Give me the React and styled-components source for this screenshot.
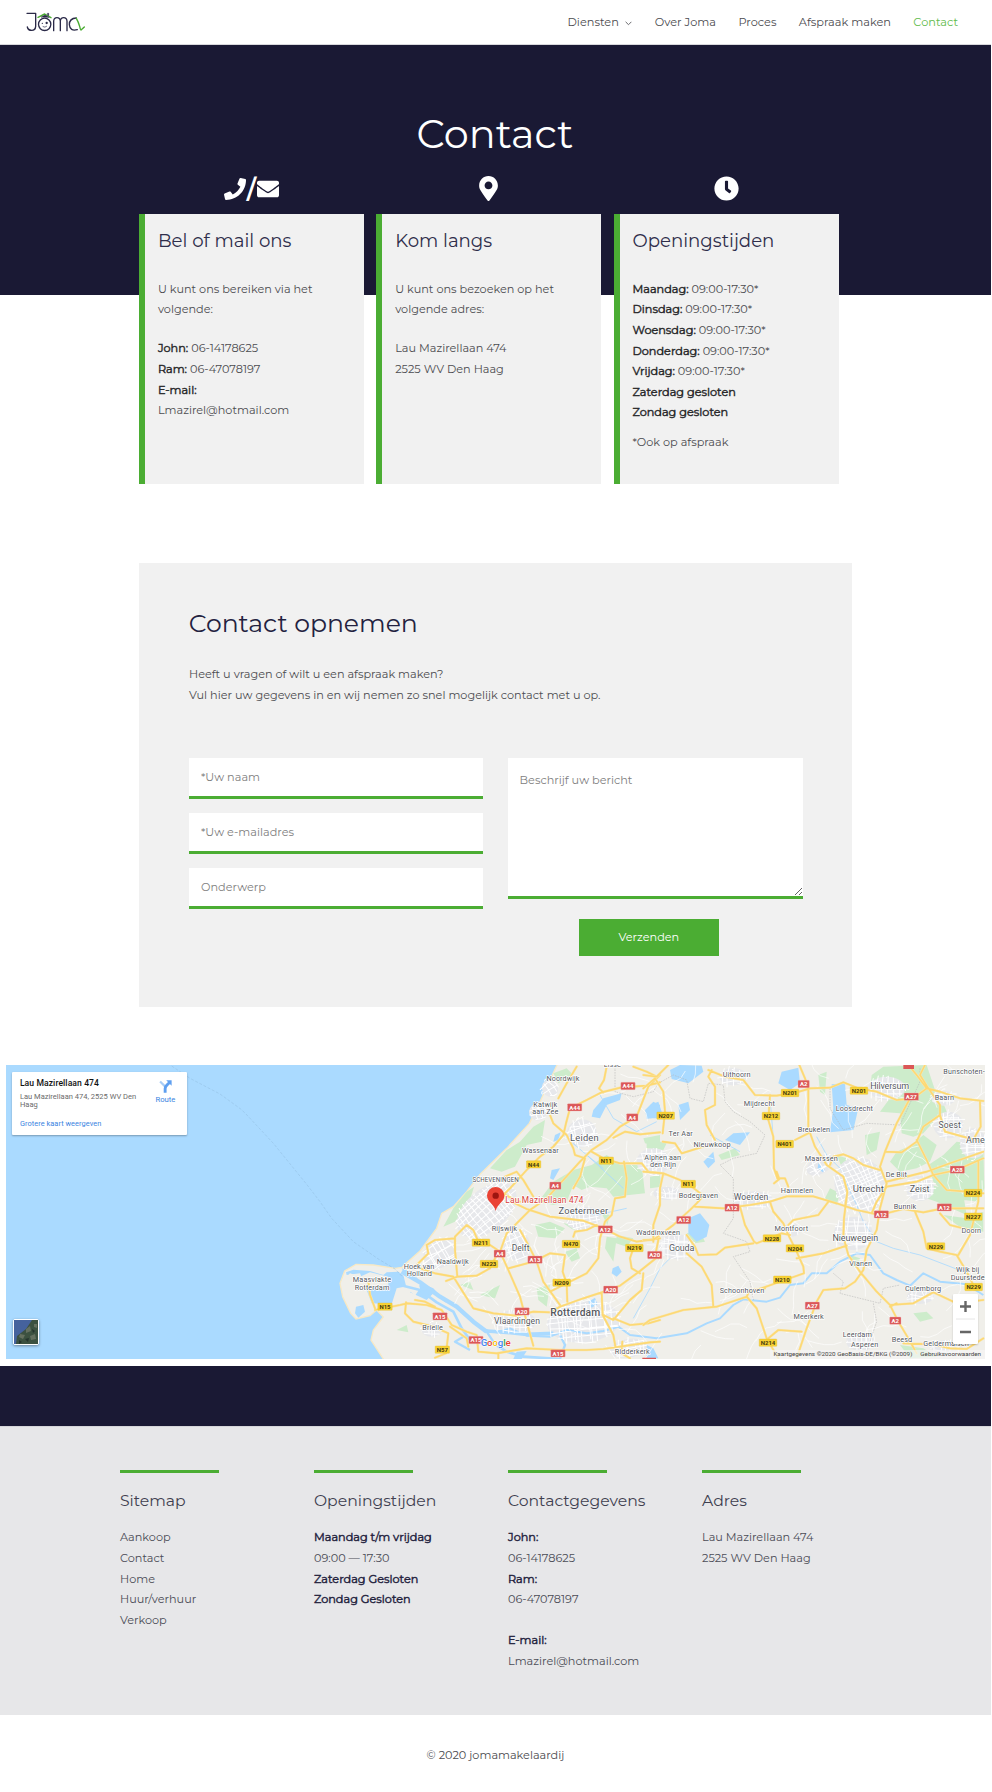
import React from 'react';
import styled, { createGlobalStyle } from 'styled-components';
import { FaPhone, FaEnvelope, FaMapMarkerAlt, FaClock } from 'react-icons/fa';

const GREEN = '#4bad33';
const NAVY = '#1a1934';

const Global = createGlobalStyle`
  * { box-sizing: border-box; }
  body { margin: 0; background: #fff; }
  body, input, textarea, button {
    font-family: Montserrat, Inter, "Liberation Sans", sans-serif;
    font-size: 11.27px;
  }
`;

const Page = styled.div`
  width: 991px;
  min-height: 1792px;
  background: #fff;
  color: #4c4c50;
  line-height: 20.6px;
`;

/* ---------- header ---------- */
const Header = styled.header`
  display: flex;
  align-items: center;
  justify-content: space-between;
  height: 45px;
  padding: 0 33px 0 26px;
  border-bottom: 1px solid #d8d8dc;
`;
const Nav = styled.nav`
  display: flex;
  gap: 22.4px;
  font-size: 11.33px;
`;
const NavLink = styled.a`
  display: flex;
  align-items: center;
  gap: 6.5px;
  color: ${(p) => (p.$active ? '#5fbb4b' : '#4c4c50')};
  svg { width: 7px; height: 5px; margin-top: 2px; }
`;
const LogoSvg = styled.svg`
  width: 60px;
  height: 22px;
`;

function Logo() {
  return (
    <LogoSvg viewBox="78 34 180 66" fill="none" strokeLinecap="round" strokeLinejoin="round">
      <g stroke="#2b2a48" strokeWidth="4">
        <path d="M81 41H107V80Q106 92 95 92Q84 92 82 82" />
        <circle cx="134" cy="74" r="18.5" />
        <path d="M161 93V64Q162 54 171 54Q180 54 181 64V93M181 64Q182 54 191 54Q200 54 201 64V93" />
        <path d="M232 90Q210 96 208 75Q208 56 229 55" />
      </g>
      <path d="M114 53L134 43L153 54M229 56Q235 66 239 80Q241 90 243 91L253 82" stroke={GREEN} strokeWidth="4.2" />
      <path d="M124 52L135 46L147 53ZM143 41H146V48L143 46Z" fill="#2b2a48" stroke="#2b2a48" strokeWidth="1.5" />
      <circle cx="127" cy="71" r="2" fill="#2b2a48" />
      <circle cx="140" cy="70" r="3.5" fill="#2b2a48" />
      <path d="M129 81Q135 85 140 80" stroke="#2b2a48" strokeWidth="2" />
    </LogoSvg>
  );
}

/* ---------- hero and info cards ---------- */
const Hero = styled.section`
  height: 250px;
  padding: 65px 0 0 139px;
  background: ${NAVY};
`;
const HeroTitle = styled.h1`
  margin: 0;
  padding-left: 277.5px;
  font-size: 39.8px;
  font-weight: 400;
  line-height: 47px;
  color: #fff;
`;
const InfoGrid = styled.div`
  display: grid;
  grid-template-columns: repeat(3, 225px);
  column-gap: 12.3px;
`;
const IconLine = styled.div`
  display: flex;
  align-items: center;
  justify-content: center;
  height: 57px;
  padding-top: 6px;
  color: #fff;
`;
const Slash = styled.span`
  width: 11px;
  text-align: center;
  font-size: 25px;
  font-weight: 600;
  line-height: 28px;
`;
const InfoCard = styled.article`
  height: 270px;
  padding: 14.5px 12px 0 12.9px;
  border-left: 6px solid ${GREEN};
  background: #f1f1f1;
`;
const CardTitle = styled.h2`
  margin: 0 0 26.3px;
  font-size: 18.15px;
  font-weight: 400;
  line-height: 24px;
  color: #2f2e4b;
`;
const Para = styled.p`
  margin: 0 0 ${(p) => p.$after || 0}px;
`;
const Strong = styled.strong`
  font-weight: 400;
  -webkit-text-stroke: 0.45px currentColor;
  color: ${(p) => (p.$navy ? '#25243f' : '#2a2a2c')};
`;

/* ---------- form ---------- */
const FormPanel = styled.section`
  width: 713px;
  height: 444px;
  margin: 268px 0 0 139px;
  padding: 45px 50px 0;
  background: #f1f1f1;
`;
const FormTitle = styled.h2`
  margin: 0 0 26.2px;
  font-size: 25.1px;
  font-weight: 400;
  line-height: 30px;
  text-indent: -0.3px;
  color: #23223f;
`;
const FormGrid = styled.form`
  display: grid;
  grid-template-columns: 294px 295px;
  column-gap: 24.6px;
  margin-top: 52.3px;
`;
const Fields = styled.div`
  display: flex;
  flex-direction: column;
  gap: 13.8px;
`;
const Input = styled.input`
  display: block;
  width: 100%;
  height: 41.3px;
  padding: 0 12px;
  border: 0;
  border-bottom: 3px solid ${GREEN};
  border-radius: 0;
  outline: 0;
  background: #fff;
  &::placeholder { color: #808080; opacity: 1; }
`;
const Message = styled.textarea`
  display: block;
  width: 100%;
  height: 141px;
  padding: 12px;
  border: 0;
  border-bottom: 3px solid ${GREEN};
  outline: 0;
  line-height: 20.6px;
  background: #fff;
  &::placeholder { color: #808080; opacity: 1; }
`;
const Submit = styled.button`
  display: block;
  width: 140px;
  height: 37px;
  margin: 20.5px 0 0 71.3px;
  padding: 0 0 1px;
  border: 0;
  background: ${GREEN};
  color: #fff;
`;

/* ---------- map ---------- */
const MapFrame = styled.section`
  position: relative;
  width: 979px;
  height: 293.6px;
  margin: 58.4px 0 0 6px;
  overflow: hidden;
  background: #aadaff;
  font-family: Roboto, sans-serif;
`;
const MapSvg = styled.svg`
  display: block;
  width: 979px;
  height: 294px;
  font-family: Roboto, sans-serif;
`;
const PlaceCard = styled.div`
  position: absolute;
  top: 6.7px;
  left: 6.4px;
  display: flex;
  justify-content: space-between;
  width: 175px;
  height: 62.5px;
  padding: 6px 12px 0 7.5px;
  border-radius: 1px;
  background: #fff;
  box-shadow: 0 1px 2px rgba(0, 0, 0, 0.3);
`;
const PlaceName = styled.div`
  font-size: 8.6px;
  font-weight: 500;
  line-height: 11px;
  letter-spacing: 0.08px;
  color: #111;
`;
const PlaceText = styled.div`
  width: 122px;
  margin: 3.5px 0 9.5px;
  font-size: 7.55px;
  line-height: 8.6px;
  color: #6b6b6b;
`;
const MapLink = styled.a`
  display: block;
  font-size: 7.4px;
  line-height: 9px;
  letter-spacing: 0.05px;
  color: #3a84df;
`;
const RouteLink = styled.a`
  display: flex;
  flex-direction: column;
  align-items: center;
  padding-top: 1.5px;
  font-size: 7.7px;
  line-height: 13px;
  color: #3a84df;
  svg { width: 13px; height: 13px; }
`;
const Thumb = styled.div`
  position: absolute;
  left: 6.5px;
  bottom: 13.5px;
  width: 26px;
  height: 26px;
  border: 1.5px solid #fff;
  border-radius: 2px;
  box-shadow: 0 1px 3px rgba(0, 0, 0, 0.4);
  svg { display: block; width: 100%; height: 100%; }
`;
const ZoomBox = styled.div`
  position: absolute;
  right: 6.7px;
  bottom: 15px;
  width: 25px;
  height: 50px;
  border-radius: 1px;
  background: #fff;
  box-shadow: 0 1px 2px rgba(0, 0, 0, 0.2);
  svg { display: block; width: 25px; height: 50px; }
`;
const Attribution = styled.div`
  position: absolute;
  right: 0;
  bottom: 0;
  display: flex;
  gap: 8px;
  height: 9px;
  padding: 0 4px 0 3px;
  background: rgba(245, 245, 245, 0.7);
  font-size: 6.25px;
  line-height: 9px;
  white-space: nowrap;
  color: #444;
`;

// The drawing works in two sheets of three units per pixel: west, and east shifted by 990 units.
const westLabels = [
  ['Lisse', 877, 37, 52, 22], ['Noordwijk', 729, 77, 99, 22], ['Katwijk', 676, 156, 72, 22], ['aan Zee', 676, 178, 78, 22],
  ['Leiden', 793, 258, 86, 28], ['Wassenaar', 661, 293, 110, 22], ['SCHEVENINGEN', 527, 381, 139, 19],
  ['Zoetermeer', 790, 477, 149, 28], ['Rijswijk', 553, 527, 76, 22], ['Delft', 602, 587, 54, 26],
  ['Naaldwijk', 398, 627, 96, 22], ['Hoek van', 297, 642, 92, 22], ['Holland', 298, 664, 76, 22],
  ['Maasvlakte', 156, 682, 115, 22], ['Rotterdam', 156, 704, 104, 22], ['Rotterdam', 766, 782, 150, 31, 500],
  ['Vlaardingen', 591, 807, 138, 26], ['Brielle', 338, 826, 62, 22], ['Ridderkerk', 937, 897, 105, 22],
];
const eastLabels = [
  ['Uithoorn', 260, 66, 84, 22], ['Mijdrecht', 328, 153, 94, 22], ['Ter Aar', 92, 244, 73, 22], ['Nieuwkoop', 186, 276, 111, 22],
  ['Alphen aan', 38, 315, 110, 22], ['den Rijn', 39, 337, 78, 22], ['Bodegraven', 145, 428, 118, 22], ['Woerden', 303, 435, 104, 26],
  ['Harmelen', 441, 415, 97, 22], ['Waddinxveen', 24, 541, 132, 22], ['Gouda', 95, 588, 76, 27], ['Montfoort', 424, 529, 101, 22],
  ['Schoonhoven', 276, 715, 134, 22], ['Breukelen', 492, 231, 97, 22], ['Maarssen', 514, 317, 99, 22], ['Loosdrecht', 613, 168, 112, 22],
  ['Hilversum', 719, 101, 117, 27], ['Bunschoten-', 942, 58, 124, 22], ['Baarn', 883, 134, 58, 22], ['Soest', 899, 219, 67, 26],
  ['Ame', 976, 265, 56, 27], ['De Bilt', 739, 367, 64, 22], ['Utrecht', 655, 411, 93, 29], ['Zeist', 809, 411, 59, 27],
  ['Bunnik', 765, 461, 68, 22], ['Doorn', 964, 533, 59, 22], ['Nieuwegein', 616, 557, 137, 27], ['Vianen', 632, 632, 68, 22],
  ['Culemborg', 819, 708, 108, 22], ['Wijk bij', 953, 652, 70, 22], ['Duurstede', 953, 675, 102, 22], ['Meerkerk', 476, 792, 91, 22],
  ['Leerdam', 622, 845, 87, 22], ['Asperen', 644, 875, 82, 22], ['Beesd', 756, 860, 61, 22], ['Geldermalsen', 888, 872, 137, 22],
];
const westShields = [
  ['A44', 924, 93], ['A44', 764, 157], ['A4', 937, 187], ['N44', 641, 328], ['N11', 859, 317], ['A4', 706, 392], ['A12', 856, 523],
  ['N211', 483, 563], ['A4', 539, 596], ['N470', 753, 567], ['N223', 507, 627], ['A13', 645, 614], ['N219', 943, 579], ['N209', 725, 683],
  ['A20', 872, 704], ['N15', 195, 755], ['A15', 360, 784], ['A20', 606, 769], ['A15', 468, 855], ['N57', 367, 884], ['A15', 714, 895],
];
const eastShields = [
  ['A2', 461, 87], ['N201', 420, 114], ['N201', 627, 107], ['A27', 784, 125], ['N207', 47, 182], ['N212', 363, 183],
  ['N401', 404, 267], ['A28', 922, 344], ['N11', 115, 387], ['N224', 969, 414], ['A12', 246, 458], ['A12', 694, 478], ['A12', 883, 457],
  ['N227', 970, 485], ['A12', 101, 495], ['A20', 14, 600], ['N228', 366, 550], ['N204', 435, 580], ['N229', 858, 574], ['N210', 397, 674],
  ['N229', 971, 696], ['A27', 487, 752], ['A2', 736, 797], ['N214', 354, 863],
];

const westRoads = [
  // A44, A4 and A12 fan out of The Hague
  'M1020 82L980 92L905 97L845 112L800 135L750 160L738 205L730 240L700 275L660 305L620 345L570 400L530 440',
  'M1020 60L985 95L950 185L900 215L860 255L815 285L780 320L730 375L680 430L630 465L590 505L560 535L540 590L565 645L600 725L620 800L640 872',
  'M860 35L852 75L837 100L850 112M770 35L740 85L715 130M690 180L700 205L740 240L760 280L765 300L795 310L780 365L760 400',
  'M575 440L620 462L690 485L790 497L850 520L900 545L950 560L1020 550',
  'M600 525L625 570L650 620L670 680L720 750M600 440L555 420L520 445M555 365L590 350L610 375L640 425',
  'M540 590L510 570L475 560L460 525L440 510L405 545L405 585L412 665L378 678M405 550L345 555L320 570L325 595L285 635',
  'M412 665L470 662L510 640L530 600M300 640L345 655L400 665L425 705L460 760L520 775L590 782L640 770L690 772L720 755L790 730L845 712L900 692L960 648L1020 600',
  'M565 640L640 620L690 595L735 600L728 650L740 685L742 740M690 710L730 690L800 655L835 610L840 550L855 500L875 480L885 430L915 425L920 370L912 320',
  'M815 290L850 310L900 325L965 325L985 350L1020 355M880 248L915 230L960 238L1020 232M760 545L765 530L800 525L830 510',
  'M165 765L240 750L262 745L320 750L365 765L395 810L440 830L470 840L475 890L530 895L620 880L720 885L800 885L850 882L990 862L1020 860',
  'M258 742L255 775L280 800L340 815L385 835L378 895L345 908M390 815L440 850L445 875',
  'M845 715L848 780L880 840L888 885L930 910M850 780L880 795L930 735L965 705L970 655M880 790L930 810L985 805L1020 795',
  'M145 680L150 720L165 760M285 735L315 740L345 755M940 580L930 610L935 640L960 655M1015 555L1008 590L1015 610M535 895V912',
  'M940 35L980 50L1010 65M905 890L907 860',
];
const eastRoads = [
  'M-20 60L20 65L55 30M-20 100L15 70L40 110L45 170L38 235M38 260L75 265L95 295L160 275',
  'M185 45L175 65L195 95L195 150L165 165L170 210L195 255M175 45L225 65L280 75L315 120L380 122L440 112L480 100L540 98L580 82L625 100L680 110L740 135L790 130L830 100L800 60L775 30',
  'M360 120L355 195L370 245L372 340L382 370L405 370L415 395',
  'M448 30L465 70L475 100L475 220L495 275L530 330L580 365L592 410L582 490L580 545L595 600L630 650L680 710L720 750L745 800L775 850L800 895',
  'M475 235L435 255M590 425L585 455M372 385L388 372L380 350',
  'M-20 350L40 355L90 375L125 395L160 422L140 445L120 465L70 510L10 555L-20 555M40 355L30 400L30 450L10 510L10 560',
  'M135 455L220 460L300 450L360 440L410 424L490 424L560 445L620 465L690 480L760 462L820 472L880 460L1000 460',
  'M270 455L285 510L312 560L320 565L395 535L420 540M360 440L370 470L400 505L415 540L440 590L460 635L462 655L390 680L320 705',
  'M415 510L430 495L505 480L535 440M440 610L520 595L590 572M110 540L135 575L145 600L200 598L225 578L310 565M110 595L155 635L185 690L190 755',
  'M-20 810L0 795L100 765L200 755L290 725L320 760L350 850L385 910M290 725L300 705L345 700M355 850L385 825L455 830M440 910L470 820L500 740L520 705L585 700L615 680L640 645L650 585L680 525L690 460L710 385L690 335L705 290L740 205L780 130',
  'M540 330L550 305L580 298L610 310L640 330L690 345M705 290L755 292L800 260L820 215L870 180L870 150L835 100L810 60L825 30',
  'M830 100L870 110L930 130L1000 138M870 180L885 230L950 248L1000 260M990 140L992 215L975 245M800 255L830 315L850 360L890 405L950 410L1000 415',
  'M665 475L680 440L710 395L800 380L850 360L920 345L1000 310M710 380L830 350L900 325L1000 290M985 320V440L960 540L925 600M795 470L820 530L830 580L870 590L920 600L950 650L975 700',
  'M870 475L900 510L960 525M720 750L790 745L850 712L920 745L1000 735M760 865L850 868L900 880L950 882L1000 850M720 755L740 745',
];
const greens = [
  'M815 330L860 300L900 330L965 330L975 415L880 425L860 400L810 395L785 405L760 390L740 440L700 450L655 440L700 380L760 345Z',
  'M640 215L675 195L665 260L620 270L585 335L545 350L510 340L560 285L600 260Z', 'M440 410L462 395L450 435L405 500L370 515L400 460Z',
  'M700 55L740 40L760 60L715 85ZM970 250L1020 240L1020 275L975 265ZM645 510L690 500L735 520L705 550L655 545Z',
  'M860 545L890 550L880 620L855 580ZM650 700L690 690L680 755L655 735ZM735 590L770 580L780 610L755 620ZM845 475L870 480L862 510Z',
  'M890 540L940 550L920 575L888 565ZM480 720L540 690L525 730ZM405 465L455 470L415 505ZM730 505L790 510L760 525ZM420 690L450 680L460 705ZM230 825L260 810L265 832ZM880 880L935 860L930 890L890 905Z',
];
const eastGreens = [
  'M700 35L830 30L870 150L860 190L820 235L790 245L755 235L750 175L690 170L720 130L660 110L665 60Z',
  'M785 270L820 240L860 270L840 320L800 340L750 350L720 320L740 290Z',
  'M835 330L880 300L920 260L1000 270L1003 400L985 440L900 430L850 380Z',
  'M830 385L940 420L950 480L860 440L800 420ZM880 480L950 490L1000 470L1000 530L935 520Z',
  'M840 110L870 120L890 170L870 195ZM645 240L690 230L680 285L650 300ZM560 300L590 310L610 345L575 335Z',
  'M540 400L570 415L560 450L525 430ZM790 775L830 770L850 790L810 800ZM205 300L255 280L270 300L215 315ZM0 365L30 360L35 395L0 400ZM-10 250L50 265L40 285L-10 280Z',
  'M505 60L530 50L525 120L510 110ZM750 870L820 880L860 905L780 910ZM620 320L680 330L670 350L640 345ZM110 535L150 530L165 560L135 565ZM600 600L630 610L620 640L600 630Z',
];
const lakes = [
  'M820 165L850 130L905 115L900 135L860 150L840 190L815 185ZM975 165L1000 140L1020 150V185L980 192ZM705 240L722 232L715 255L700 260Z',
  'M878 640L895 632L905 650L890 665L875 655ZM805 740L825 728L832 748L815 758ZM108 755L130 750L135 770L115 788L105 775ZM695 345L720 340L700 375L690 370ZM590 890L620 888L605 912H580Z',
];
const eastLakes = [
  'M60 45L90 30L155 32L160 50L115 85L65 72ZM395 50L445 38L450 85L420 105L385 85ZM545 88L585 85L590 150L625 160L610 225L540 232L550 160ZM0 150L25 140L35 170L25 190L0 190Z',
  'M85 150L115 140L120 165L90 195ZM160 320L190 290L195 320L175 340ZM250 235L300 232L270 270L225 255ZM115 490L150 475L178 510L170 545L140 560L115 535ZM505 325L525 345L518 352L503 340ZM-10 870L10 880L25 910H-10Z',
];
const towns = [
  // centre x, centre y, radius x, radius y, tilt
  [500, 465, 105, 62, 40], [785, 235, 45, 42, 15], [790, 490, 52, 34, 10], [590, 570, 40, 48, 20], [791, 800, 110, 62, 5],
  [585, 800, 62, 35, 0], [360, 595, 52, 42, 30], [690, 100, 24, 26, 30], [335, 825, 30, 20, 0], [925, 880, 55, 28, 10], [655, 170, 28, 26, 20],
  [1070, 575, 52, 38, 0], [1300, 435, 58, 26, 0], [1620, 390, 75, 85, 25], [1600, 535, 58, 50, 0], [1700, 100, 55, 35, 0], [1885, 210, 45, 40, 0],
  [1960, 265, 40, 45, 0], [1800, 400, 42, 38, 0], [1000, 320, 50, 40, 0], [1240, 65, 42, 26, 0], [1415, 525, 26, 20, 0], [1801, 725, 40, 22, 0],
  [1621, 860, 42, 28, 0], [1501, 330, 45, 26, 30], [1040, 415, 40, 20, 0], [1870, 130, 36, 22, 0], [1880, 875, 48, 20, 0],
];

function streetPath([cx, cy, rx, ry], seed) {
  let d = '';
  for (let u = -rx; u <= rx; u += 15) {
    const h = ry * Math.sqrt(Math.max(0, 1 - (u / rx) ** 2));
    const j = Math.sin(u * seed + seed) * 7;
    d += `M${cx + u} ${cy - h + j}L${cx + u + j} ${cy}V${cy + h - j}`;
  }
  for (let v = -ry; v <= ry; v += 15) {
    const w = rx * Math.sqrt(Math.max(0, 1 - (v / ry) ** 2));
    const j = Math.cos(v * seed) * 7;
    d += `M${cx - w + j} ${cy + v}L${cx} ${cy + v + j}H${cx + w - j}`;
  }
  return d;
}

function lanePath(x0, x1, y0, y1, count) {
  let s = 17;
  const rnd = () => (s = (s * 16807) % 2147483647) / 2147483647;
  let d = '';
  for (let i = 0; i < count; i++) {
    let x = x0 + rnd() * (x1 - x0);
    let y = y0 + rnd() * (y1 - y0);
    let a = rnd() * 6.28;
    d += `M${x.toFixed(0)} ${y.toFixed(0)}`;
    for (let k = 0; k < 4; k++) {
      a += (rnd() - 0.5) * 1.2;
      x += Math.cos(a) * 26;
      y += Math.sin(a) * 26;
      d += `L${x.toFixed(0)} ${y.toFixed(0)}`;
    }
  }
  return d;
}

const LabelText = styled.text`
  fill: #55585e;
  stroke: #fff;
  stroke-width: 4px;
  stroke-linejoin: round;
  paint-order: stroke;
  text-anchor: middle;
`;
const ShieldText = styled.text`
  fill: ${(p) => (p.$motorway ? '#fff' : '#443a10')};
  font-size: 18px;
  font-weight: 700;
  text-anchor: middle;
`;

function Labels({ items }) {
  return items.map(([t, x, y, w, size, weight]) => (
    <LabelText key={t + x} x={x} y={y} textLength={w} fontSize={size} fontWeight={weight || 400}>{t}</LabelText>
  ));
}

function Shields({ items }) {
  return items.map(([t, x, y]) => {
    const motorway = t[0] === 'A';
    const w = t.length === 2 ? 34 : t.length === 3 ? 43 : 53;
    return (
      <g key={t + x}>
        <rect x={x - w / 2} y={y - 11} width={w} height="22" rx="2" fill={motorway ? '#db5757' : '#f8d234'} stroke={motorway ? '#f3b3b3' : '#e0b92a'} strokeWidth="1" />
        <ShieldText $motorway={motorway} x={x} y={y + 6.5}>{t}</ShieldText>
      </g>
    );
  });
}

function Roads({ items }) {
  return (
    <>
      <path d={items.join('')} stroke="#f7e7b8" strokeWidth="7.5" />
      <path d={items.join('')} stroke="#fdd974" strokeWidth="5" />
    </>
  );
}

function RegionMap() {
  const land = 'M712 28L690 75L660 140L628 205L560 280L480 358L440 410L400 455L365 475L350 520L300 588L262 622L246 637L225 640L160 630L108 628L74 648L60 685L68 725L92 775L108 792L150 782L170 765L190 786L160 825L153 855L192 915H2000V28Z';
  return (
    <MapSvg viewBox="-942 30 2937 882">
      <path d={land} fill="#f0efea" stroke="#f8e9c5" strokeWidth="4" />
      <path d="M80 660L120 655L138 700L155 745L215 748L230 700L280 690L245 640L285 655L300 690L270 712L320 735L340 715L380 745L340 700L260 668L235 650L200 652L190 660L150 648L100 644L78 652Z" fill="#aadaff" />
      <path d="M78 668L90 655L120 665L150 652L205 665L205 690L140 700L105 675L82 700L92 735L75 715Z" fill="#f0efea" />
      <path d="M250 660L285 655L300 700L285 722L260 700Z" fill="#f0efea" />
      <g fill="#cdeccb">
        <path d={greens.join('')} />
        <g transform="translate(990 0)"><path d={eastGreens.join('')} /></g>
      </g>
      <g fill="#e7e8eb">
        {towns.map(([x, y, rx, ry, tilt]) => (
          <ellipse key={x} cx={x} cy={y} rx={rx} ry={ry} transform={`rotate(${-tilt} ${x} ${y})`} />
        ))}
      </g>
      <g fill="#aadaff">
        <path d={lakes.join('')} />
        <g transform="translate(990 0)"><path d={eastLakes.join('')} /></g>
      </g>
      <g fill="none" stroke="#aadaff" strokeLinejoin="round">
        <path d="M245 650L300 682L360 725L410 755L460 800L500 830" strokeWidth="13" />
        <path d="M240 690L300 705L350 742L400 770L425 820L450 855L520 865L560 890L610 905L720 912" strokeWidth="8" />
        <path d="M490 825L530 832L570 820L620 842L690 845L740 825L800 835L850 828L895 815L930 840L1010 850L1100 835L1160 805L1200 790L1240 750L1270 733L1340 740L1380 728L1410 690L1450 685L1475 655L1520 655L1560 620L1610 595L1650 600L1690 655L1730 675L1770 692L1810 655L1860 680L1940 688L1990 720" strokeWidth="6" />
        <path d="M500 828L560 832L620 838L700 835" strokeWidth="11" />
        <path d="M720 840L735 870L720 912M430 845L405 860L450 885M500 830L520 860" strokeWidth="7" />
        <path d="M1490 245L1520 300L1570 350L1590 410L1610 450L1630 500L1670 560L1720 580L1800 600L1930 650M940 790L990 700L1020 640L1050 610M700 270L730 240L800 300L850 340M800 300L910 400M720 460L830 480L920 460M840 120L880 190L950 230L1010 200M1350 130L1360 250M1170 240L1260 290" strokeWidth="2.5" />
      </g>
      <g fill="none" stroke="#fff" strokeLinejoin="round">
        <path d={lanePath(720, 1990, 60, 890, 150)} strokeWidth="2" />
        <path d={lanePath(440, 900, 500, 760, 42)} strokeWidth="2.2" />
        {towns.map((t, i) => (
          <path key={t[0]} d={streetPath(t, i + 1.3)} transform={`rotate(${-t[4]} ${t[0]} ${t[1]})`} strokeWidth="3" />
        ))}
      </g>
      <g fill="none" stroke="#b3b3b3" strokeWidth="1.6" strokeDasharray="5 3">
        <path d="M885 35V110L940 125L1000 110L1015 85L1060 60L1100 75L1110 130L1150 140L1165 85L1210 90L1215 140L1240 170L1290 200L1335 240L1310 295L1240 310L1200 330L1240 370L1240 490L1210 535L1280 560L1290 590L1240 605L1290 680L1300 735M1530 100V160L1570 225L1640 205L1740 210L1800 80L1800 40M1540 655L1570 680L1560 715L1680 745L1690 700L1740 690M1660 745L1670 800L1640 890" />
      </g>
      <path d="M-445 33L-390 70L-300 117L-238 162L-224 175L-140 265L-40 388L0 440L35 490L100 560L175 612L225 642L250 668" fill="none" stroke="#8fb9dc" strokeWidth="1.4" strokeDasharray="9 5" />
      <g fill="none" strokeLinejoin="round" strokeLinecap="round">
        <Roads items={westRoads} />
        <g transform="translate(990 0)"><Roads items={eastRoads} /></g>
      </g>
      <path d="M1750 28H1782V42H1750ZM967 908H1008V914H967Z" fill="#db5757" />
      <Shields items={westShields} />
      <g transform="translate(990 0)"><Shields items={eastShields} /></g>
      <Labels items={westLabels} />
      <g transform="translate(990 0)"><Labels items={eastLabels} /></g>
      <path d="M527 468C521 444 501 443 501 421A26 25 0 0 1 553 421C553 443 533 444 527 468Z" fill="#ea4335" />
      <circle cx="527" cy="422" r="9.5" fill="#9c1510" />
      <text x="556" y="444" fontSize="25" textLength="234" fill="#d8403a" stroke="#fff" strokeWidth="4" paintOrder="stroke">Lau Mazirellaan 474</text>
      <text x="482" y="872" fontSize="29" fontWeight="500" textLength="90" stroke="#fff" strokeWidth="3" paintOrder="stroke">
        <tspan fill="#4285f4">G</tspan><tspan fill="#ea4335">o</tspan><tspan fill="#fbbc05">o</tspan><tspan fill="#4285f4">g</tspan><tspan fill="#34a853">l</tspan><tspan fill="#ea4335">e</tspan>
      </text>
    </MapSvg>
  );
}

/* ---------- footer ---------- */
const DarkBand = styled.div`
  height: 60px;
  margin-top: 7px;
  background: ${NAVY};
`;
const Footer = styled.footer`
  display: grid;
  grid-template-columns: repeat(4, 194px);
  height: 289px;
  padding: 43.5px 0 0 120px;
  border-top: 1px solid #d6d6da;
  background: #e7e7e9;
  color: #4b4c56;
`;
const FooterColumn = styled.div`
  &::before {
    content: '';
    display: block;
    width: 99px;
    height: 3px;
    background: ${GREEN};
  }
`;
const FooterTitle = styled.h3`
  margin: 17.2px 0 16.7px;
  font-size: 15.65px;
  font-weight: 400;
  line-height: 20px;
  color: #3f3f50;
`;
const FooterLink = styled.a`
  display: block;
`;
const Copyright = styled.div`
  padding-top: 29.8px;
  text-align: center;
`;

const days = ['Maandag', 'Dinsdag', 'Woensdag', 'Donderdag', 'Vrijdag'];

export default function App() {
  return (
    <Page>
      <Global />
      <Header>
        <Logo />
        <Nav>
          <NavLink>
            Diensten
            <svg viewBox="0 0 7 5"><path d="M.6 .8L3.5 3.7L6.4 .8" fill="none" stroke="#6a6a6e" strokeWidth="1" /></svg>
          </NavLink>
          <NavLink>Over Joma</NavLink>
          <NavLink>Proces</NavLink>
          <NavLink>Afspraak maken</NavLink>
          <NavLink $active>Contact</NavLink>
        </Nav>
      </Header>

      <Hero>
        <HeroTitle>Contact</HeroTitle>
        <InfoGrid>
          <IconLine><FaPhone size={22} /><Slash>/</Slash><FaEnvelope size={22} /></IconLine>
          <IconLine><FaMapMarkerAlt size={25} /></IconLine>
          <IconLine><FaClock size={25} /></IconLine>
          <InfoCard>
            <CardTitle>Bel of mail ons</CardTitle>
            <Para $after={18.5}>U kunt ons bereiken via het volgende:</Para>
            <Para>
              <Strong>John:</Strong> 06-14178625<br />
              <Strong>Ram:</Strong> 06-47078197<br />
              <Strong>E-mail:</Strong><br />
              Lmazirel@hotmail.com
            </Para>
          </InfoCard>
          <InfoCard>
            <CardTitle>Kom langs</CardTitle>
            <Para $after={18.5}>U kunt ons bezoeken op het volgende adres:</Para>
            <Para>Lau Mazirellaan 474<br />2525 WV Den Haag</Para>
          </InfoCard>
          <InfoCard>
            <CardTitle>Openingstijden</CardTitle>
            <Para $after={9.5}>
              {days.map((d) => (
                <React.Fragment key={d}><Strong>{d}:</Strong> 09:00-17:30*<br /></React.Fragment>
              ))}
              <Strong>Zaterdag gesloten</Strong><br />
              <Strong>Zondag gesloten</Strong>
            </Para>
            <Para>*Ook op afspraak</Para>
          </InfoCard>
        </InfoGrid>
      </Hero>

      <FormPanel>
        <FormTitle>Contact opnemen</FormTitle>
        <Para>
          Heeft u vragen of wilt u een afspraak maken?<br />
          Vul hier uw gegevens in en wij nemen zo snel mogelijk contact met u op.
        </Para>
        <FormGrid>
          <Fields>
            <Input placeholder="*Uw naam" />
            <Input placeholder="*Uw e-mailadres" />
            <Input placeholder="Onderwerp" />
          </Fields>
          <div>
            <Message placeholder="Beschrijf uw bericht" />
            <Submit type="button">Verzenden</Submit>
          </div>
        </FormGrid>
      </FormPanel>

      <MapFrame>
        <RegionMap />
        <PlaceCard>
          <div>
            <PlaceName>Lau Mazirellaan 474</PlaceName>
            <PlaceText>Lau Mazirellaan 474, 2525 WV Den Haag</PlaceText>
            <MapLink>Grotere kaart weergeven</MapLink>
          </div>
          <RouteLink>
            <svg viewBox="0 0 36 36">
              <path d="M3 4L18 19" stroke="#a9cdf6" strokeWidth="6" />
              <path d="M17 35V24Q17 18 23 13L29 7" fill="none" stroke="#5e9ff0" strokeWidth="8" />
              <path d="M20 1H35V16Z" fill="#5e9ff0" />
            </svg>
            Route
          </RouteLink>
        </PlaceCard>
        <Thumb>
          <svg viewBox="0 0 24 24">
            <path d="M0 0H24V24H0Z" fill="#3c5140" />
            <path d="M0 0H18L12 9L3 16L2 24H0Z" fill="#45629d" />
            <path d="M12 9L16 6L17 11L12 13ZM6 14L11 15L9 19L5 17ZM16 16L21 14L22 19L17 20ZM20 4H23V8L20 7Z" fill="#64705f" />
            <path d="M11 19L15 18L14 22ZM18 9L21 11L19 13ZM5 20L8 22L5 24Z" fill="#24342c" />
          </svg>
        </Thumb>
        <ZoomBox>
          <svg viewBox="0 0 25 50">
            <path d="M7 12.5H18M12.5 7V18M7 38H18" stroke="#666" strokeWidth="2.4" />
            <path d="M3 25H22" stroke="#e6e6e6" />
          </svg>
        </ZoomBox>
        <Attribution>
          <span>Kaartgegevens ©2020 GeoBasis-DE/BKG (©2009)</span>
          <span>Gebruiksvoorwaarden</span>
        </Attribution>
      </MapFrame>

      <DarkBand />
      <Footer>
        <FooterColumn>
          <FooterTitle>Sitemap</FooterTitle>
          {['Aankoop', 'Contact', 'Home', 'Huur/verhuur', 'Verkoop'].map((t) => <FooterLink key={t}>{t}</FooterLink>)}
        </FooterColumn>
        <FooterColumn>
          <FooterTitle>Openingstijden</FooterTitle>
          <Strong $navy>Maandag t/m vrijdag</Strong><br />
          09:00 — 17:30<br />
          <Strong $navy>Zaterdag Gesloten</Strong><br />
          <Strong $navy>Zondag Gesloten</Strong>
        </FooterColumn>
        <FooterColumn>
          <FooterTitle>Contactgegevens</FooterTitle>
          <Strong $navy>John:</Strong><br />
          06-14178625<br />
          <Strong $navy>Ram:</Strong><br />
          06-47078197<br /><br />
          <Strong $navy>E-mail:</Strong><br />
          Lmazirel@hotmail.com
        </FooterColumn>
        <FooterColumn>
          <FooterTitle>Adres</FooterTitle>
          <Para>Lau Mazirellaan 474<br />2525 WV Den Haag</Para>
        </FooterColumn>
      </Footer>
      <Copyright>© 2020 jomamakelaardij</Copyright>
    </Page>
  );
}
